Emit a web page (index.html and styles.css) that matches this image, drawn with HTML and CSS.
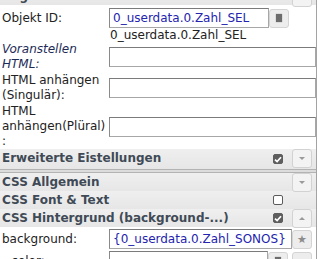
FILE: index.html
```html
<!DOCTYPE html>
<html lang="de">
<head>
  <meta charset="UTF-8">
  <meta name="viewport" content="width=device-width, initial-scale=1.0">
  <title>Attribute</title>
  <link rel="stylesheet" href="styles.css">
</head>
<body>
<div class="panel">
  <div class="group-head top">
    <span class="title">Allgemein</span>
    <span class="hbtn"><i class="tri-up"></i></span>
  </div>

  <div class="row row-id">
    <div class="lbl">Objekt ID:</div>
    <div class="val">
      <div class="field">
        <input class="inp short" type="text" value="0_userdata.0.Zahl_SEL">
        <span class="btn"><i class="ico-sq"></i></span>
      </div>
      <div class="hint">0_userdata.0.Zahl_SEL</div>
    </div>
  </div>

  <div class="row">
    <div class="lbl it">Voranstellen HTML:</div>
    <div class="val"><input class="inp" type="text"></div>
  </div>

  <div class="row">
    <div class="lbl">HTML anhängen (Singulär):</div>
    <div class="val"><input class="inp" type="text"></div>
  </div>

  <div class="row tall">
    <div class="lbl">HTML anhängen(Plüral) :</div>
    <div class="val"><input class="inp" type="text"></div>
  </div>

  <!-- groups -->
  <div class="group-head big">
    <span class="title">Erweiterte Eistellungen</span>
    <span class="chk on"><svg width="8" height="7" viewBox="0 0 8 7"><path d="M1 3.6 L3.1 5.6 L7 1.2" fill="none" stroke="#fff" stroke-width="1.7"/></svg></span>
    <span class="hbtn"><i class="tri-down"></i></span>
  </div>
  <div class="sep"></div>

  <div class="group-head">
    <span class="title">CSS Allgemein</span>
    <span class="hbtn"><i class="tri-down"></i></span>
  </div>

  <div class="group-head">
    <span class="title">CSS Font &amp; Text</span>
    <span class="chk"></span>
    <span class="hbtn none"></span>
  </div>

  <div class="group-head">
    <span class="title">CSS Hintergrund (background-...)</span>
    <span class="chk on"><svg width="8" height="7" viewBox="0 0 8 7"><path d="M1 3.6 L3.1 5.6 L7 1.2" fill="none" stroke="#fff" stroke-width="1.7"/></svg></span>
    <span class="hbtn"><i class="tri-up"></i></span>
  </div>

  <div class="row prop">
    <div class="lbl">background:</div>
    <div class="val">
      <div class="field">
        <input class="inp" type="text" value="{0_userdata.0.Zahl_SONOS}">
        <span class="btn star">&#9733;</span>
      </div>
    </div>
  </div>

  <div class="row prop">
    <div class="lbl sub">-color:</div>
    <div class="val">
      <div class="field">
        <input class="inp" type="text">
        <span class="btn"><i class="ico-sq"></i></span>
        <span class="btn gap"><i class="tri-up"></i></span>
      </div>
    </div>
  </div>
</div>
</body>
</html>
```

FILE: styles.css
```css
body {
  margin: 0;
  font-family: "DejaVu Sans", Verdana, sans-serif;
  font-size: 12px;
  color: #222;
  background: #fff;
  overflow: hidden;
}
.panel {
  width: 316px;
  border-right: 1px solid #a3a3a3;
  margin-top: -13px;
  min-height: 300px;
}

/* group headers */
.group-head {
  display: flex;
  align-items: flex-start;
  height: 18px;
  padding: 0 4px 0 2px;
  background: linear-gradient(#efefef, #e6e6e6);
  color: #3f4a56;
  font-weight: bold;
  line-height: 18px;
}
.group-head.big {
  height: 20px;
}
.group-head .title {
  flex: 1;
  white-space: nowrap;
  overflow: hidden;
}
.hbtn {
  width: 18px;
  height: 17px;
  margin-left: 9px;
  border: 1px solid #d2d2d2;
  border-radius: 3px;
  background: #f3f3f3;
  display: flex;
  align-items: center;
  justify-content: center;
  position: relative;
  z-index: 1;
}
.hbtn.none {
  visibility: hidden;
}
.group-head.top .hbtn {
  height: 18px;
}
.chk {
  width: 8px;
  height: 8px;
  margin-top: 4px;
  border: 1px solid #5b5b5b;
  border-radius: 2px;
  background: #fff;
  display: flex;
  align-items: center;
  justify-content: center;
}
.group-head.big .chk {
  margin-top: 5px;
}
.chk.on {
  background: #5e5e5e;
  border-color: #5e5e5e;
}
.sep {
  height: 2px;
  border-top: 1px solid #b3b3b3;
  border-bottom: 1px solid #b3b3b3;
  background: #dcdcdc;
}

.tri-down, .tri-up {
  width: 0;
  height: 0;
  border-left: 3px solid transparent;
  border-right: 3px solid transparent;
}
.tri-down {
  border-top: 3px solid #9a9a9a;
}
.tri-up {
  border-bottom: 3px solid #9a9a9a;
}

/* property rows */
.row {
  display: flex;
  align-items: center;
  line-height: 15px;
  margin-bottom: 1px;
}
.row.tall {
  margin-bottom: 0;
}
.lbl {
  width: 105px;
  padding: 0 2px;
  flex: none;
}
.lbl.it {
  font-style: italic;
  color: #1d2b57;
}
.lbl.sub {
  padding-left: 7px;
  width: 100px;
}
.val {
  flex: 1;
  min-width: 0;
}
.row-id {
  align-items: flex-start;
  margin-bottom: 0;
}
.row-id .lbl {
  margin-top: 6px;
}
.row-id .field {
  margin-top: 3px;
  padding-right: 27px;
}
.hint {
  line-height: 14px;
  padding-left: 1px;
  white-space: nowrap;
}
.field {
  display: flex;
  align-items: center;
}
.inp {
  box-sizing: border-box;
  width: 100%;
  height: 20px;
  margin: 0;
  padding: 0 3px;
  border: 1px solid #a7a7a7;
  border-top-color: #7b7b7b;
  border-left-color: #8a8a8a;
  border-radius: 0;
  font-family: inherit;
  font-size: 12px;
  color: #2424b0;
  background: #fff;
  flex: 1;
  min-width: 0;
}
.btn {
  flex: none;
  box-sizing: border-box;
  width: 20px;
  height: 19px;
  border: 1px solid #d4d4d4;
  border-radius: 3px;
  background: #ededed;
  display: flex;
  align-items: center;
  justify-content: center;
  color: #8c8c8c;
  font-size: 11px;
}
.btn.gap {
  margin-left: 4px;
}
.ico-sq {
  width: 6px;
  height: 8px;
  background: #6c6c6c;
  box-shadow: 0 0 1px #888;
}
.prop {
  margin-top: 2px;
}
.prop .field {
  padding-right: 4px;
}
```
